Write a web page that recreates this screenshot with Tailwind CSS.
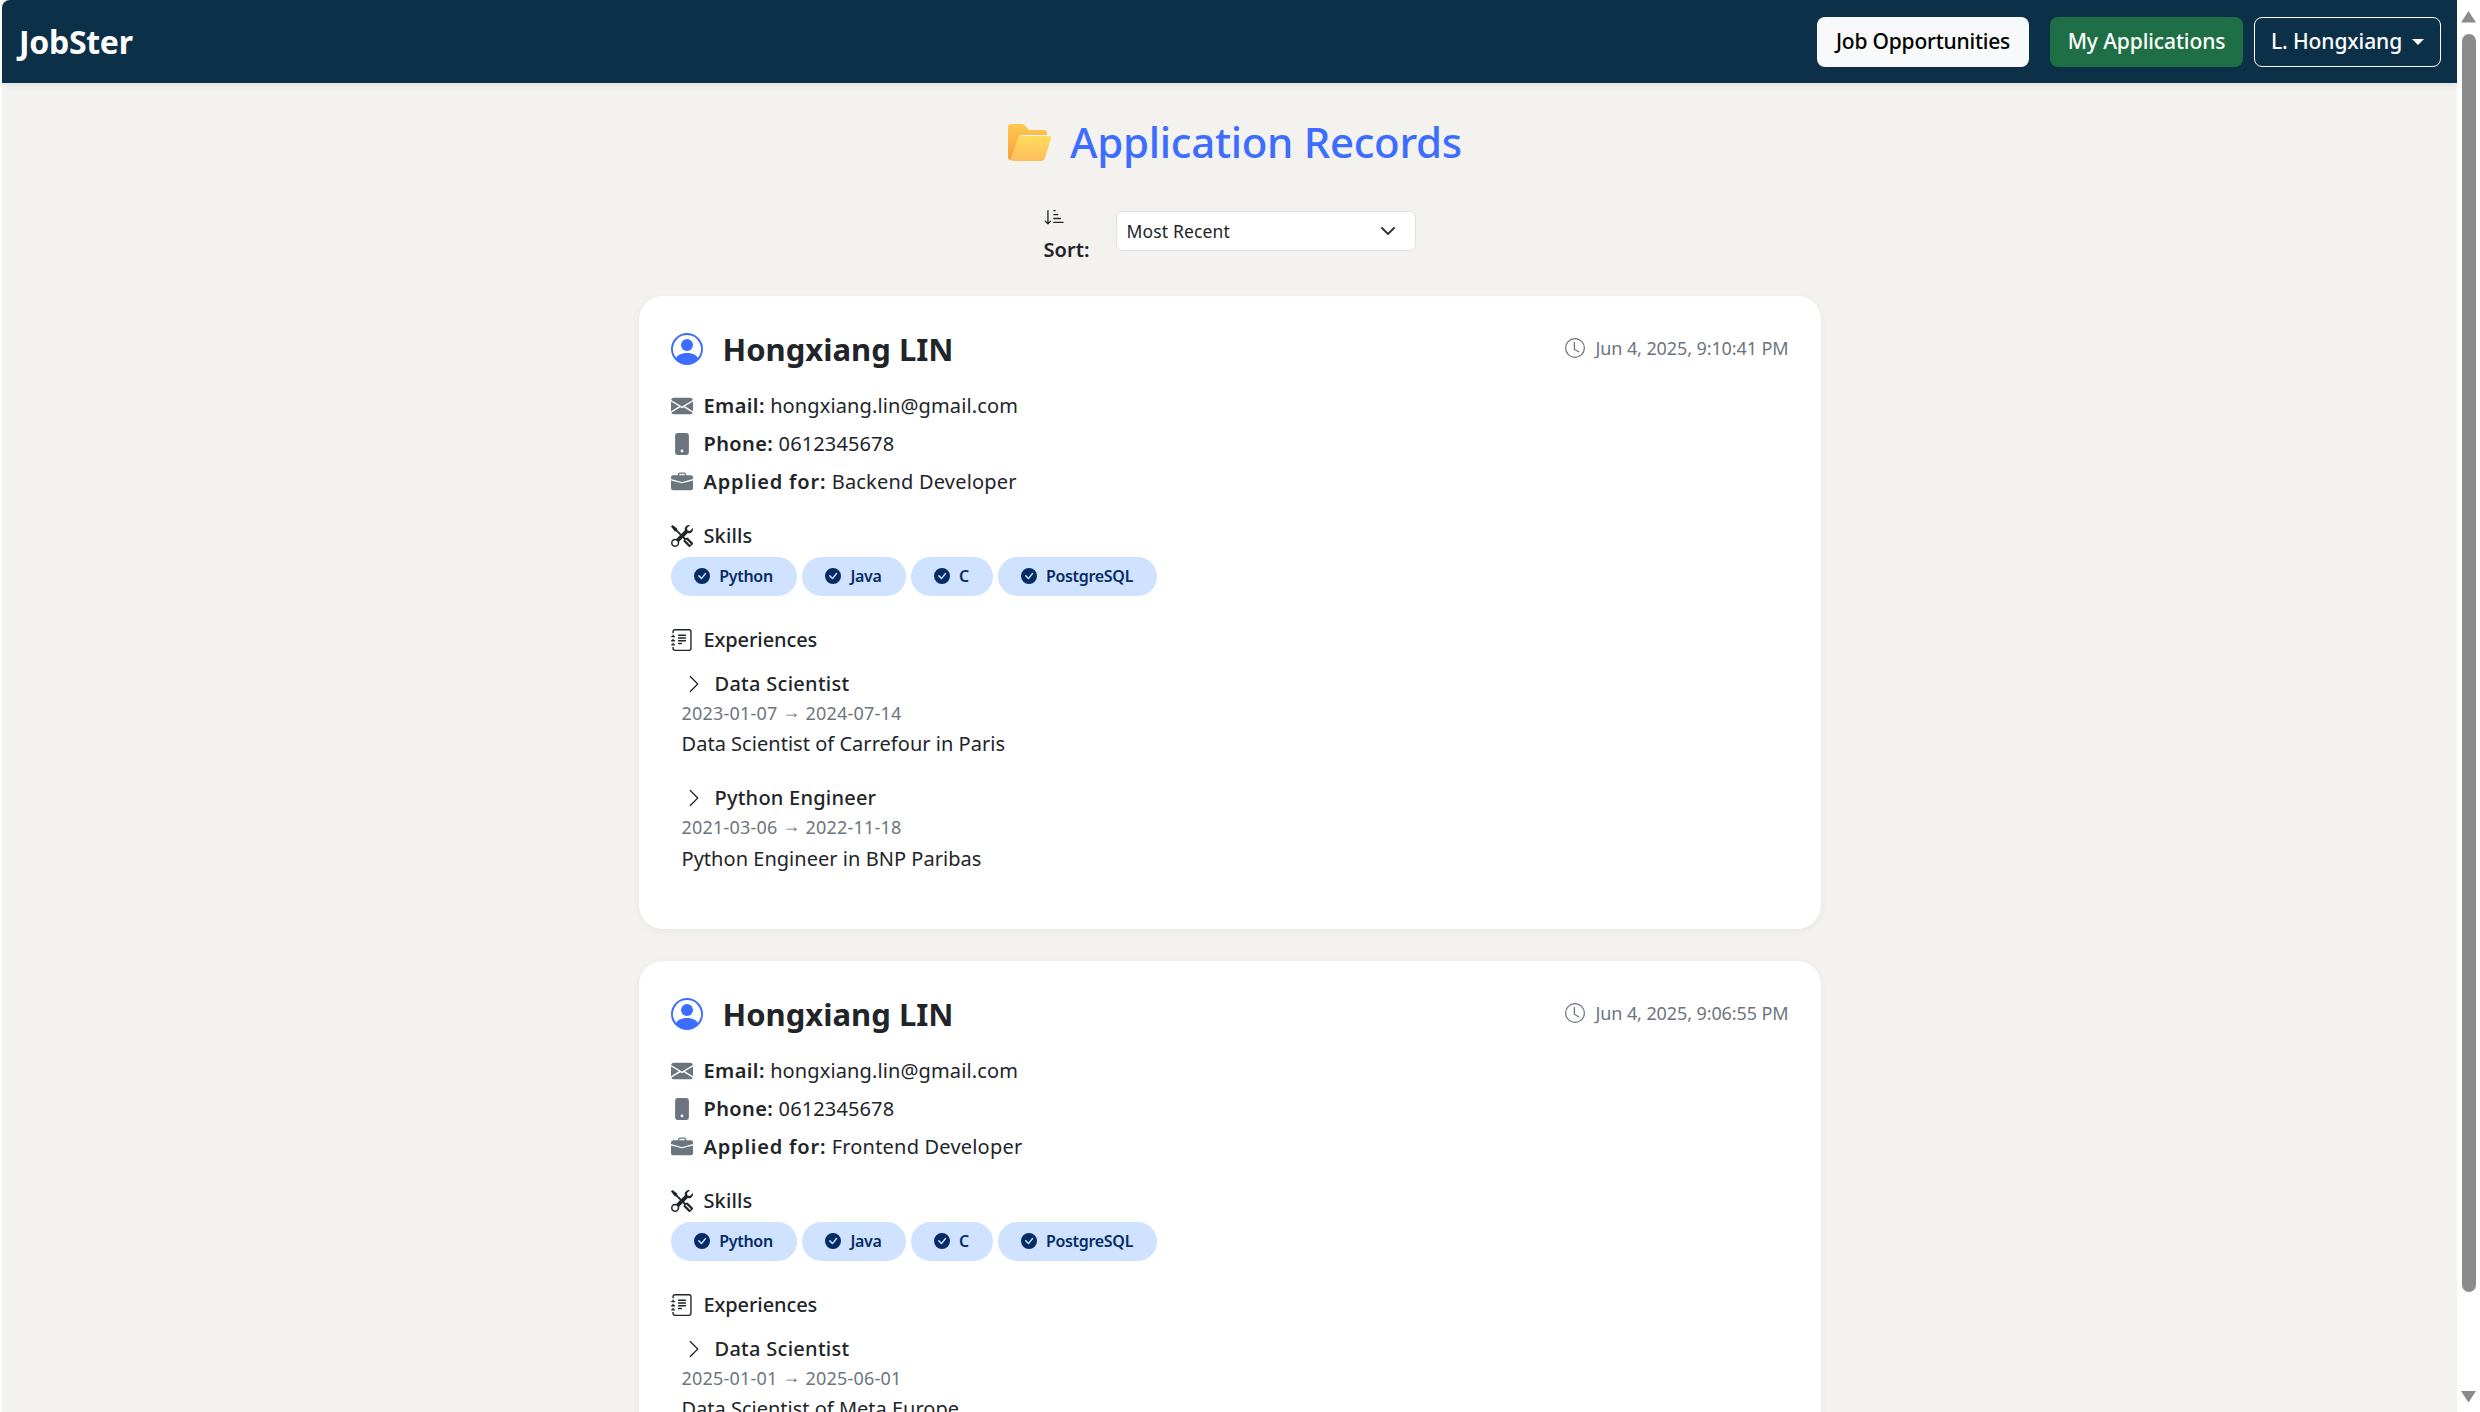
<!DOCTYPE html>
<html>
<head>
<meta charset="utf-8">
<script src="https://cdn.jsdelivr.net/npm/@tailwindcss/browser@4"></script>
</head>
<body class="bg-white">
<div class="flex h-[1412px] w-[2480px] overflow-hidden bg-white font-['Noto_Sans',sans-serif] text-[20px] text-[#212529]">
  <div class="ml-[2px] flex h-full w-[2455px] flex-col overflow-hidden bg-[#f3f2ee]">
    <nav class="flex h-[83px] shrink-0 items-center justify-between rounded-tl-[8px] bg-[#0d3049] pl-[17px] pr-[16px] shadow-[0_2px_6px_rgba(0,0,0,0.08)]">
      <span class="text-[32px] font-bold leading-none tracking-[-0.3px] text-white">JobSter</span>
      <div class="flex items-center text-[21px] font-medium">
        <a class="flex h-[50px] w-[212px] items-center justify-center rounded-[8px] bg-[#f8f9fa] tracking-[-0.2px] text-black">Job Opportunities</a>
        <a class="ml-[21px] flex h-[50px] w-[193px] items-center justify-center rounded-[8px] bg-[#1e6f45] tracking-[-0.1px] text-white">My Applications</a>
        <button class="ml-[11px] flex h-[50px] w-[187px] items-center justify-center gap-[10px] rounded-[8px] border border-white tracking-[-0.1px] text-white">L. Hongxiang
          <span class="h-0 w-0 border-x-[6px] border-t-[6px] border-x-transparent border-t-white"></span>
        </button>
      </div>
    </nav>

    <main class="flex flex-col items-center">
      <h2 class="ml-[11px] mt-[32px] flex h-[54px] items-center gap-[19px] text-[42px] font-medium leading-none tracking-[-0.3px] text-[#3d6dff]">
        <svg class="h-[37px] w-[43px]" viewBox="0 0 43 37">
          <defs>
            <linearGradient id="fb" x1="0" y1="0" x2="0" y2="1"><stop offset="0" stop-color="#fdc94f"/><stop offset="1" stop-color="#fb9d3c"/></linearGradient>
            <linearGradient id="ff" x1="0" y1="0" x2="0" y2="1"><stop offset="0" stop-color="#ffdc5c"/><stop offset="1" stop-color="#fdbd5e"/></linearGradient>
          </defs>
          <path d="M3 0h11c1.2 0 2 .5 3 1.5L21 6h15c1.700 0 3 1.300 3 3v2H14c-2 0-3 1-3.600 3L5 36H3c-1.700 0-3-1.300-3-3V3c0-1.700 1.300-3 3-3z" fill="url(#fb)"/>
          <path d="M13 12h28c1.500 0 2.300 1 1.900 2.500L37 34c-.6 2-1.800 3-3.600 3H5c-1.800 0-2.600-1-2.100-2.600L9.800 14.500C10.300 13 11.300 12 13 12z" fill="url(#ff)"/>
        </svg>
        Application Records
      </h2>
      <div class="mt-[42px] flex h-[85px] w-[372px]">
        <div class="flex w-[72px] flex-col">
          <svg class="mt-[-5px] h-[21px] w-[21px]" viewBox="0 0 16 16" fill="currentColor"><path d="M3.5 3.5a.5.5 0 0 0-1 0v8.793l-1.146-1.147a.5.5 0 0 0-.708.708l2 1.999.007.007a.497.497 0 0 0 .7-.006l2-2a.5.5 0 0 0-.707-.708L3.5 12.293zm4 .5a.5.5 0 0 1 0-1h1a.5.5 0 0 1 0 1zm0 3a.5.5 0 0 1 0-1h3a.5.5 0 0 1 0 1zm0 3a.5.5 0 0 1 0-1h5a.5.5 0 0 1 0 1zM7 12.5a.5.5 0 0 0 .5.5h7a.5.5 0 0 0 0-1h-7a.5.5 0 0 0-.5.5"/></svg>
          <span class="mt-[8px] font-semibold leading-[30px] tracking-[0.1px]">Sort:</span>
        </div>
        <div class="flex h-[40px] w-[300px] items-center justify-between rounded-[6px] border border-[#dee2e6] bg-white pl-[10px] pr-[19px] text-[17.5px] tracking-[0.15px]">
          Most Recent
          <svg class="h-[16px] w-[16px]" viewBox="0 0 16 16" fill="none" stroke="#343a40" stroke-width="2" stroke-linecap="round" stroke-linejoin="round"><path d="m2 5 6 6 6-6"/></svg>
        </div>
      </div>

      <article class="flex h-[633px] w-[1182px] shrink-0 flex-col rounded-[24px] bg-white px-[32px] pt-[33px] shadow-[0_2px_8px_rgba(0,0,0,0.05)]">
        <header class="flex h-[40px] items-center justify-between">
          <div class="flex items-center gap-[20px]">
            <svg class="h-[32px] w-[32px] text-[#3d6dff]" viewBox="0 0 16 16" fill="currentColor"><path d="M11 6a3 3 0 1 1-6 0 3 3 0 0 1 6 0"/><path fill-rule="evenodd" d="M0 8a8 8 0 1 1 16 0A8 8 0 0 1 0 8m8-7a7 7 0 0 0-5.468 11.37C3.242 11.226 4.805 10 8 10s4.757 1.225 5.468 2.37A7 7 0 0 0 8 1"/></svg>
            <span class="text-[31px] font-bold leading-none">Hongxiang LIN</span>
          </div>
          <div class="flex items-center gap-[10px] pb-[2px] text-[18px] tracking-[-0.1px] text-[#6c757d]">
            <svg class="h-[20px] w-[20px]" viewBox="0 0 16 16" fill="currentColor"><path d="M8 3.5a.5.5 0 0 0-1 0V9a.5.5 0 0 0 .252.434l3.5 2a.5.5 0 0 0 .496-.868L8 8.71z"/><path d="M8 16A8 8 0 1 0 8 0a8 8 0 0 0 0 16m7-8A7 7 0 1 1 1 8a7 7 0 0 1 14 0"/></svg>
            Jun 4, 2025, 9:10:41 PM
          </div>
        </header>
        <div class="mt-[18px] flex h-[38px] items-center">
          <svg class="h-[22px] w-[22px] text-[#6c757d]" viewBox="0 0 16 16" fill="currentColor"><path d="M.05 3.555A2 2 0 0 1 2 2h12a2 2 0 0 1 1.95 1.555L8 8.414zM0 4.697v7.104l5.803-3.558zM6.761 8.83l-6.57 4.027A2 2 0 0 0 2 14h12a2 2 0 0 0 1.808-1.144l-6.57-4.027L8 9.586zm3.436-.586L16 11.801V4.697z"/></svg>
          <span class="ml-[11px] tracking-[0.12px]"><b class="font-semibold tracking-[0.4px]">Email:</b> hongxiang.lin@gmail.com</span>
        </div>
        <div class="flex h-[38px] items-center">
          <svg class="h-[22px] w-[22px] text-[#6c757d]" viewBox="0 0 16 16" fill="currentColor"><path d="M3 2a2 2 0 0 1 2-2h6a2 2 0 0 1 2 2v12a2 2 0 0 1-2 2H5a2 2 0 0 1-2-2zm6 11a1 1 0 1 0-2 0 1 1 0 0 0 2 0"/></svg>
          <span class="ml-[11px] tracking-[0.12px]"><b class="font-semibold tracking-[0.4px]">Phone:</b> 0612345678</span>
        </div>
        <div class="flex h-[38px] items-center">
          <svg class="h-[22px] w-[22px] text-[#6c757d]" viewBox="0 0 16 16" fill="currentColor"><path d="M6.5 1A1.5 1.5 0 0 0 5 2.5V3H1.5A1.5 1.5 0 0 0 0 4.5v1.384l7.614 2.03a1.5 1.5 0 0 0 .772 0L16 5.884V4.5A1.5 1.5 0 0 0 14.5 3H11v-.5A1.5 1.5 0 0 0 9.5 1zm0 1h3a.5.5 0 0 1 .5.5V3H6v-.5a.5.5 0 0 1 .5-.5"/><path d="M0 12.5A1.5 1.5 0 0 0 1.5 14h13a1.500 1.500 0 0 0 1.500-1.500V6.85L8.129 8.947a.5.5 0 0 1-.258 0L0 6.85z"/></svg>
          <span class="ml-[11px] tracking-[0.2px]"><b class="font-semibold tracking-[0.8px]">Applied for:</b> Backend Developer</span>
        </div>
        <div class="mt-[20px] flex h-[30px] items-center">
          <svg class="h-[22px] w-[22px]" viewBox="0 0 16 16" fill="currentColor"><path d="M1 0 0 1l2.2 3.081a1 1 0 0 0 .815.419h.07a1 1 0 0 1 .708.293l2.675 2.675-2.617 2.654A3.003 3.003 0 0 0 0 13a3 3 0 1 0 5.878-.851l2.654-2.617.968.968-.305.914a1 1 0 0 0 .242 1.023l3.27 3.27a.997.997 0 0 0 1.414 0l1.586-1.586a.997.997 0 0 0 0-1.414l-3.27-3.27a1 1 0 0 0-1.023-.242L10.5 9.5l-.96-.96 2.68-2.643A3.005 3.005 0 0 0 16 3q0-.405-.102-.777l-2.14 2.141L12 4l-.364-1.757L13.777.102a3 3 0 0 0-3.675 3.68L7.462 6.46 4.793 3.793a1 1 0 0 1-.293-.707v-.071a1 1 0 0 0-.419-.814zm9.646 10.646a.5.5 0 0 1 .708 0l2.914 2.915a.5.5 0 0 1-.707.707l-2.915-2.914a.5.5 0 0 1 0-.708M3 11l.471.242.529.026.287.445.445.287.026.529L5 13l-.242.471-.026.529-.445.287-.287.445-.529.026L3 15l-.471-.242L2 14.732l-.287-.445L1.268 14l-.026-.529L1 13l.242-.471.026-.529.445-.287.287-.445.529-.026z"/></svg>
          <span class="ml-[11px] font-medium tracking-[0.1px]">Skills</span>
        </div>
        <div class="mt-[6px] flex h-[39px] gap-[5px] text-[16px] font-semibold tracking-[-0.3px] text-[#052c65]">
          <span class="flex w-[126px] items-center justify-center gap-[9px] rounded-full bg-[#cfe2ff] pb-[1px]"><svg class="h-[16px] w-[16px]" viewBox="0 0 16 16" fill="currentColor"><path d="M16 8A8 8 0 1 1 0 8a8 8 0 0 1 16 0m-3.97-3.03a.75.75 0 0 0-1.08.022L7.477 9.417 5.384 7.323a.75.75 0 0 0-1.06 1.06L6.97 11.03a.75.75 0 0 0 1.079-.02l3.992-4.99a.75.75 0 0 0-.01-1.05z"/></svg>Python</span>
          <span class="flex w-[104px] items-center justify-center gap-[9px] rounded-full bg-[#cfe2ff] pb-[1px]"><svg class="h-[16px] w-[16px]" viewBox="0 0 16 16" fill="currentColor"><path d="M16 8A8 8 0 1 1 0 8a8 8 0 0 1 16 0m-3.97-3.03a.75.75 0 0 0-1.08.022L7.477 9.417 5.384 7.323a.75.75 0 0 0-1.06 1.06L6.97 11.03a.75.75 0 0 0 1.079-.02l3.992-4.99a.75.75 0 0 0-.01-1.05z"/></svg>Java</span>
          <span class="flex w-[82px] items-center justify-center gap-[9px] rounded-full bg-[#cfe2ff] pb-[1px]"><svg class="h-[16px] w-[16px]" viewBox="0 0 16 16" fill="currentColor"><path d="M16 8A8 8 0 1 1 0 8a8 8 0 0 1 16 0m-3.97-3.03a.75.75 0 0 0-1.08.022L7.477 9.417 5.384 7.323a.75.75 0 0 0-1.06 1.06L6.97 11.03a.75.75 0 0 0 1.079-.02l3.992-4.99a.75.75 0 0 0-.01-1.05z"/></svg>C</span>
          <span class="flex w-[159px] items-center justify-center gap-[9px] rounded-full bg-[#cfe2ff] pb-[1px]"><svg class="h-[16px] w-[16px]" viewBox="0 0 16 16" fill="currentColor"><path d="M16 8A8 8 0 1 1 0 8a8 8 0 0 1 16 0m-3.97-3.03a.75.75 0 0 0-1.08.022L7.477 9.417 5.384 7.323a.75.75 0 0 0-1.06 1.06L6.97 11.03a.75.75 0 0 0 1.079-.02l3.992-4.99a.75.75 0 0 0-.01-1.05z"/></svg>PostgreSQL</span>
        </div>
        <div class="mt-[29px] flex h-[30px] items-center">
          <svg class="h-[22px] w-[22px]" viewBox="0 0 16 16" fill="currentColor"><path d="M5 10.5a.5.5 0 0 1 .5-.5h2a.5.5 0 0 1 0 1h-2a.5.5 0 0 1-.5-.5m0-2a.5.5 0 0 1 .5-.5h5a.5.5 0 0 1 0 1h-5a.5.5 0 0 1-.5-.5m0-2a.5.5 0 0 1 .5-.5h5a.5.5 0 0 1 0 1h-5a.5.5 0 0 1-.5-.5m0-2a.5.5 0 0 1 .5-.5h5a.5.5 0 0 1 0 1h-5a.5.5 0 0 1-.5-.5"/><path d="M3 0h10a2 2 0 0 1 2 2v12a2 2 0 0 1-2 2H3a2 2 0 0 1-2-2v-1h1v1a1 1 0 0 0 1 1h10a1 1 0 0 0 1-1V2a1 1 0 0 0-1-1H3a1 1 0 0 0-1 1v1H1V2a2 2 0 0 1 2-2"/><path d="M1 5v-.5a.5.5 0 0 1 1 0V5h.5a.5.5 0 0 1 0 1h-2a.5.5 0 0 1 0-1zm0 3v-.5a.5.5 0 0 1 1 0V8h.5a.5.5 0 0 1 0 1h-2a.5.5 0 0 1 0-1zm0 3v-.5a.5.5 0 0 1 1 0v.5h.5a.5.5 0 0 1 0 1h-2a.5.5 0 0 1 0-1z"/></svg>
          <span class="ml-[11px] font-medium tracking-[-0.1px]">Experiences</span>
        </div>
        <div class="ml-[11px] mt-[14px] flex h-[30px] items-center">
          <svg class="ml-[2px] h-[20px] w-[20px]" viewBox="0 0 16 16" fill="currentColor"><path fill-rule="evenodd" d="M4.646 1.646a.5.5 0 0 1 .708 0l6 6a.5.5 0 0 1 0 .708l-6 6a.5.5 0 0 1-.708-.708L10.293 8 4.646 2.354a.5.5 0 0 1 0-.708"/></svg>
          <span class="ml-[11px] font-medium tracking-[0.28px]">Data Scientist</span>
        </div>
        <div class="ml-[11px] h-[28px] text-[18px] leading-[28px] tracking-[0.2px] text-[#6c757d]">2023-01-07 <span class="inline-block -translate-y-[2px]">→</span> 2024-07-14</div>
        <div class="ml-[11px] mt-[2px] h-[30px] leading-[30px] tracking-[0.03px]">Data Scientist of Carrefour in Paris</div>
        <div class="ml-[11px] mt-[24px] flex h-[30px] items-center">
          <svg class="ml-[2px] h-[20px] w-[20px]" viewBox="0 0 16 16" fill="currentColor"><path fill-rule="evenodd" d="M4.646 1.646a.5.5 0 0 1 .708 0l6 6a.5.5 0 0 1 0 .708l-6 6a.5.5 0 0 1-.708-.708L10.293 8 4.646 2.354a.5.5 0 0 1 0-.708"/></svg>
          <span class="ml-[11px] font-medium tracking-[0.23px]">Python Engineer</span>
        </div>
        <div class="ml-[11px] h-[29px] text-[18px] leading-[29px] tracking-[0.2px] text-[#6c757d]">2021-03-06 <span class="inline-block -translate-y-[2px]">→</span> 2022-11-18</div>
        <div class="ml-[11px] mt-[2px] h-[30px] leading-[30px] tracking-[0.03px]">Python Engineer in BNP Paribas</div>
      </article>

      <article class="mt-[32px] flex h-[633px] w-[1182px] shrink-0 flex-col rounded-[24px] bg-white px-[32px] pt-[33px] shadow-[0_2px_8px_rgba(0,0,0,0.05)]">
        <header class="flex h-[40px] items-center justify-between">
          <div class="flex items-center gap-[20px]">
            <svg class="h-[32px] w-[32px] text-[#3d6dff]" viewBox="0 0 16 16" fill="currentColor"><path d="M11 6a3 3 0 1 1-6 0 3 3 0 0 1 6 0"/><path fill-rule="evenodd" d="M0 8a8 8 0 1 1 16 0A8 8 0 0 1 0 8m8-7a7 7 0 0 0-5.468 11.37C3.242 11.226 4.805 10 8 10s4.757 1.225 5.468 2.37A7 7 0 0 0 8 1"/></svg>
            <span class="text-[31px] font-bold leading-none">Hongxiang LIN</span>
          </div>
          <div class="flex items-center gap-[10px] pb-[2px] text-[18px] tracking-[-0.1px] text-[#6c757d]">
            <svg class="h-[20px] w-[20px]" viewBox="0 0 16 16" fill="currentColor"><path d="M8 3.5a.5.5 0 0 0-1 0V9a.5.5 0 0 0 .252.434l3.5 2a.5.5 0 0 0 .496-.868L8 8.71z"/><path d="M8 16A8 8 0 1 0 8 0a8 8 0 0 0 0 16m7-8A7 7 0 1 1 1 8a7 7 0 0 1 14 0"/></svg>
            Jun 4, 2025, 9:06:55 PM
          </div>
        </header>
        <div class="mt-[18px] flex h-[38px] items-center">
          <svg class="h-[22px] w-[22px] text-[#6c757d]" viewBox="0 0 16 16" fill="currentColor"><path d="M.05 3.555A2 2 0 0 1 2 2h12a2 2 0 0 1 1.95 1.555L8 8.414zM0 4.697v7.104l5.803-3.558zM6.761 8.83l-6.57 4.027A2 2 0 0 0 2 14h12a2 2 0 0 0 1.808-1.144l-6.57-4.027L8 9.586zm3.436-.586L16 11.801V4.697z"/></svg>
          <span class="ml-[11px] tracking-[0.12px]"><b class="font-semibold tracking-[0.4px]">Email:</b> hongxiang.lin@gmail.com</span>
        </div>
        <div class="flex h-[38px] items-center">
          <svg class="h-[22px] w-[22px] text-[#6c757d]" viewBox="0 0 16 16" fill="currentColor"><path d="M3 2a2 2 0 0 1 2-2h6a2 2 0 0 1 2 2v12a2 2 0 0 1-2 2H5a2 2 0 0 1-2-2zm6 11a1 1 0 1 0-2 0 1 1 0 0 0 2 0"/></svg>
          <span class="ml-[11px] tracking-[0.12px]"><b class="font-semibold tracking-[0.4px]">Phone:</b> 0612345678</span>
        </div>
        <div class="flex h-[38px] items-center">
          <svg class="h-[22px] w-[22px] text-[#6c757d]" viewBox="0 0 16 16" fill="currentColor"><path d="M6.5 1A1.5 1.5 0 0 0 5 2.5V3H1.5A1.5 1.5 0 0 0 0 4.5v1.384l7.614 2.03a1.5 1.5 0 0 0 .772 0L16 5.884V4.5A1.5 1.5 0 0 0 14.5 3H11v-.5A1.5 1.5 0 0 0 9.5 1zm0 1h3a.5.5 0 0 1 .5.5V3H6v-.5a.5.5 0 0 1 .5-.5"/><path d="M0 12.5A1.5 1.5 0 0 0 1.5 14h13a1.500 1.500 0 0 0 1.500-1.500V6.85L8.129 8.947a.5.5 0 0 1-.258 0L0 6.85z"/></svg>
          <span class="ml-[11px] tracking-[0.2px]"><b class="font-semibold tracking-[0.8px]">Applied for:</b> Frontend Developer</span>
        </div>
        <div class="mt-[20px] flex h-[30px] items-center">
          <svg class="h-[22px] w-[22px]" viewBox="0 0 16 16" fill="currentColor"><path d="M1 0 0 1l2.2 3.081a1 1 0 0 0 .815.419h.07a1 1 0 0 1 .708.293l2.675 2.675-2.617 2.654A3.003 3.003 0 0 0 0 13a3 3 0 1 0 5.878-.851l2.654-2.617.968.968-.305.914a1 1 0 0 0 .242 1.023l3.27 3.27a.997.997 0 0 0 1.414 0l1.586-1.586a.997.997 0 0 0 0-1.414l-3.27-3.27a1 1 0 0 0-1.023-.242L10.5 9.5l-.96-.96 2.68-2.643A3.005 3.005 0 0 0 16 3q0-.405-.102-.777l-2.14 2.141L12 4l-.364-1.757L13.777.102a3 3 0 0 0-3.675 3.68L7.462 6.46 4.793 3.793a1 1 0 0 1-.293-.707v-.071a1 1 0 0 0-.419-.814zm9.646 10.646a.5.5 0 0 1 .708 0l2.914 2.915a.5.5 0 0 1-.707.707l-2.915-2.914a.5.5 0 0 1 0-.708M3 11l.471.242.529.026.287.445.445.287.026.529L5 13l-.242.471-.026.529-.445.287-.287.445-.529.026L3 15l-.471-.242L2 14.732l-.287-.445L1.268 14l-.026-.529L1 13l.242-.471.026-.529.445-.287.287-.445.529-.026z"/></svg>
          <span class="ml-[11px] font-medium tracking-[0.1px]">Skills</span>
        </div>
        <div class="mt-[6px] flex h-[39px] gap-[5px] text-[16px] font-semibold tracking-[-0.3px] text-[#052c65]">
          <span class="flex w-[126px] items-center justify-center gap-[9px] rounded-full bg-[#cfe2ff] pb-[1px]"><svg class="h-[16px] w-[16px]" viewBox="0 0 16 16" fill="currentColor"><path d="M16 8A8 8 0 1 1 0 8a8 8 0 0 1 16 0m-3.97-3.03a.75.75 0 0 0-1.08.022L7.477 9.417 5.384 7.323a.75.75 0 0 0-1.06 1.06L6.97 11.03a.75.75 0 0 0 1.079-.02l3.992-4.99a.75.75 0 0 0-.01-1.05z"/></svg>Python</span>
          <span class="flex w-[104px] items-center justify-center gap-[9px] rounded-full bg-[#cfe2ff] pb-[1px]"><svg class="h-[16px] w-[16px]" viewBox="0 0 16 16" fill="currentColor"><path d="M16 8A8 8 0 1 1 0 8a8 8 0 0 1 16 0m-3.97-3.03a.75.75 0 0 0-1.08.022L7.477 9.417 5.384 7.323a.75.75 0 0 0-1.06 1.06L6.97 11.03a.75.75 0 0 0 1.079-.02l3.992-4.99a.75.75 0 0 0-.01-1.05z"/></svg>Java</span>
          <span class="flex w-[82px] items-center justify-center gap-[9px] rounded-full bg-[#cfe2ff] pb-[1px]"><svg class="h-[16px] w-[16px]" viewBox="0 0 16 16" fill="currentColor"><path d="M16 8A8 8 0 1 1 0 8a8 8 0 0 1 16 0m-3.97-3.03a.75.75 0 0 0-1.08.022L7.477 9.417 5.384 7.323a.75.75 0 0 0-1.06 1.06L6.97 11.03a.75.75 0 0 0 1.079-.02l3.992-4.99a.75.75 0 0 0-.01-1.05z"/></svg>C</span>
          <span class="flex w-[159px] items-center justify-center gap-[9px] rounded-full bg-[#cfe2ff] pb-[1px]"><svg class="h-[16px] w-[16px]" viewBox="0 0 16 16" fill="currentColor"><path d="M16 8A8 8 0 1 1 0 8a8 8 0 0 1 16 0m-3.97-3.03a.75.75 0 0 0-1.08.022L7.477 9.417 5.384 7.323a.75.75 0 0 0-1.06 1.06L6.97 11.03a.75.75 0 0 0 1.079-.02l3.992-4.99a.75.75 0 0 0-.01-1.05z"/></svg>PostgreSQL</span>
        </div>
        <div class="mt-[29px] flex h-[30px] items-center">
          <svg class="h-[22px] w-[22px]" viewBox="0 0 16 16" fill="currentColor"><path d="M5 10.5a.5.5 0 0 1 .5-.5h2a.5.5 0 0 1 0 1h-2a.5.5 0 0 1-.5-.5m0-2a.5.5 0 0 1 .5-.5h5a.5.5 0 0 1 0 1h-5a.5.5 0 0 1-.5-.5m0-2a.5.5 0 0 1 .5-.5h5a.5.5 0 0 1 0 1h-5a.5.5 0 0 1-.5-.5m0-2a.5.5 0 0 1 .5-.5h5a.5.5 0 0 1 0 1h-5a.5.5 0 0 1-.5-.5"/><path d="M3 0h10a2 2 0 0 1 2 2v12a2 2 0 0 1-2 2H3a2 2 0 0 1-2-2v-1h1v1a1 1 0 0 0 1 1h10a1 1 0 0 0 1-1V2a1 1 0 0 0-1-1H3a1 1 0 0 0-1 1v1H1V2a2 2 0 0 1 2-2"/><path d="M1 5v-.5a.5.5 0 0 1 1 0V5h.5a.5.5 0 0 1 0 1h-2a.5.5 0 0 1 0-1zm0 3v-.5a.5.5 0 0 1 1 0V8h.5a.5.5 0 0 1 0 1h-2a.5.5 0 0 1 0-1zm0 3v-.5a.5.5 0 0 1 1 0v.5h.5a.5.5 0 0 1 0 1h-2a.5.5 0 0 1 0-1z"/></svg>
          <span class="ml-[11px] font-medium tracking-[-0.1px]">Experiences</span>
        </div>
        <div class="ml-[11px] mt-[14px] flex h-[30px] items-center">
          <svg class="ml-[2px] h-[20px] w-[20px]" viewBox="0 0 16 16" fill="currentColor"><path fill-rule="evenodd" d="M4.646 1.646a.5.5 0 0 1 .708 0l6 6a.5.5 0 0 1 0 .708l-6 6a.5.5 0 0 1-.708-.708L10.293 8 4.646 2.354a.5.5 0 0 1 0-.708"/></svg>
          <span class="ml-[11px] font-medium tracking-[0.28px]">Data Scientist</span>
        </div>
        <div class="ml-[11px] h-[28px] text-[18px] leading-[28px] tracking-[0.2px] text-[#6c757d]">2025-01-01 <span class="inline-block -translate-y-[2px]">→</span> 2025-06-01</div>
        <div class="ml-[11px] mt-[2px] h-[30px] leading-[30px]">Data Scientist of Meta Europe</div>
      </article>
    </main>
  </div>

  <div class="flex h-full w-[23px] flex-col items-center rounded-br-[8px] bg-white">
    <svg class="mt-[11px] h-[12px] w-[15px] text-[#8b8b8b]" viewBox="0 0 15 12" fill="currentColor"><path d="M7.5 0 15 11.500H0z"/></svg>
    <div class="mt-[11px] h-[1258px] w-[14px] rounded-full bg-[#8b8b8b]"></div>
    <svg class="mt-[99px] h-[12px] w-[15px] text-[#8b8b8b]" viewBox="0 0 15 12" fill="currentColor"><path d="M0 0h15L7.5 11.500z"/></svg>
  </div>
</div>
</body>
</html>
